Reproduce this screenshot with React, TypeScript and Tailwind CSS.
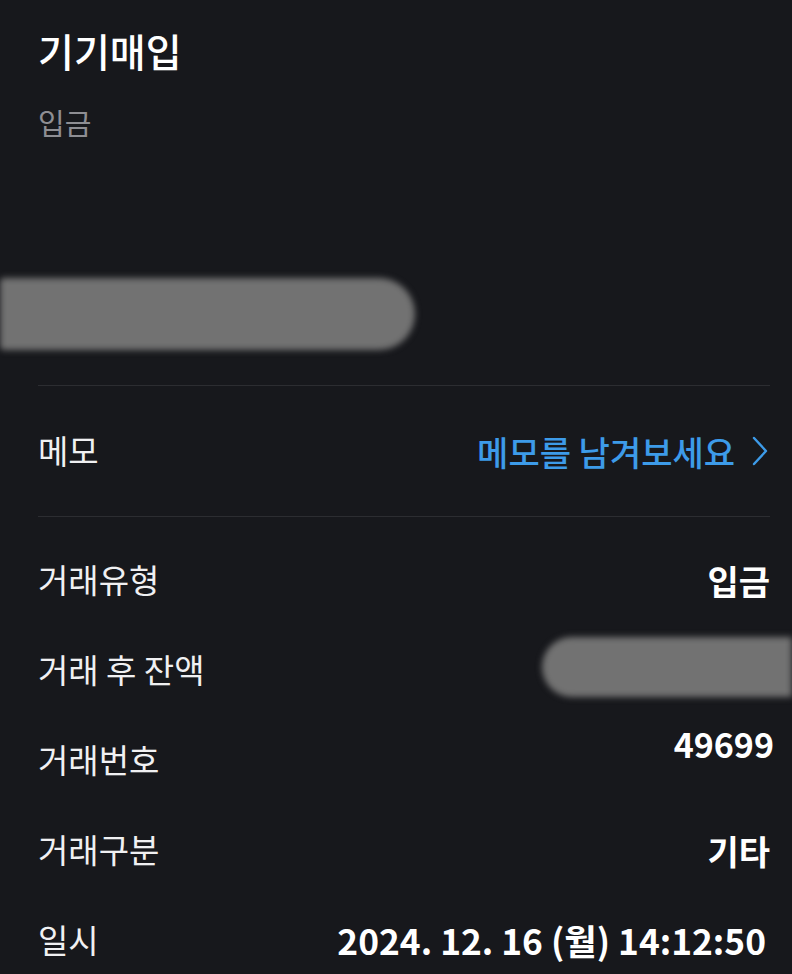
import React from "react";

const font = { fontFamily: '"Noto Sans CJK KR", "Noto Sans", sans-serif' };

function Redact({ className }: { className: string }) {
  return <div className={"bg-[#727272] blur-[3px] " + className} />;
}

export default function App() {
  return (
    <div className="w-[792px] h-[974px] bg-[#17181c] overflow-hidden" style={font}>
      <div className="pl-[38px] pr-[22px]">
        <div className="pt-[22px] text-[39px] font-medium leading-[56px] text-white">기기매입</div>
        <div className="mt-[24px] text-[29px] leading-[40px] text-[#8e8e93]">입금</div>
      </div>
      <div className="mt-[136px] flex">
        <Redact className="w-[415px] h-[72px] rounded-r-[36px] rounded-l-[4px]" />
      </div>
      <div className="ml-[38px] mr-[22px] mt-[35px] border-t border-[#2c2d31]" />
      <div className="ml-[38px] mr-[22px] flex items-center justify-between h-[130px]">
        <span className="text-[33px] text-[#f0f0f2]">메모</span>
        <div className="flex items-center gap-[17px] text-[#3d9be9] mr-[2px]">
          <span className="text-[34px] font-medium">메모를 남겨보세요</span>
          <svg width="16" height="30" viewBox="0 0 16 30" fill="none">
            <path d="M2 2 L14 15 L2 28" stroke="#3d9be9" strokeWidth="2.4" strokeLinecap="round" strokeLinejoin="round" />
          </svg>
        </div>
      </div>
      <div className="ml-[38px] mr-[22px] border-t border-[#2c2d31]" />
      <div className="pl-[38px] pr-[22px] pt-[18px]">
        <div className="flex items-center justify-between h-[90px]">
          <span className="text-[33px] text-[#f0f0f2]">거래유형</span>
          <span className="text-[34px] font-bold text-white">입금</span>
        </div>
        <div className="flex items-center justify-between h-[90px]">
          <span className="text-[33px] text-[#f0f0f2]">거래 후 잔액</span>
          <Redact className="w-[250px] h-[60px] rounded-l-[30px] mr-[-22px] mt-[-6px]" />
        </div>
        <div className="flex items-center justify-between h-[90px]">
          <span className="text-[33px] text-[#f0f0f2]">거래번호</span>
          <span className="text-[34px] font-bold text-white mt-[-34px] mr-[-4px]">49699</span>
        </div>
        <div className="flex items-center justify-between h-[90px]">
          <span className="text-[33px] text-[#f0f0f2]">거래구분</span>
          <span className="text-[34px] font-bold text-white">기타</span>
        </div>
        <div className="flex items-center justify-between h-[90px]">
          <span className="text-[33px] text-[#f0f0f2]">일시</span>
          <span className="text-[35.3px] font-semibold text-white mr-[4px]">2024. 12. 16 (월) 14:12:50</span>
        </div>
      </div>
    </div>
  );
}
